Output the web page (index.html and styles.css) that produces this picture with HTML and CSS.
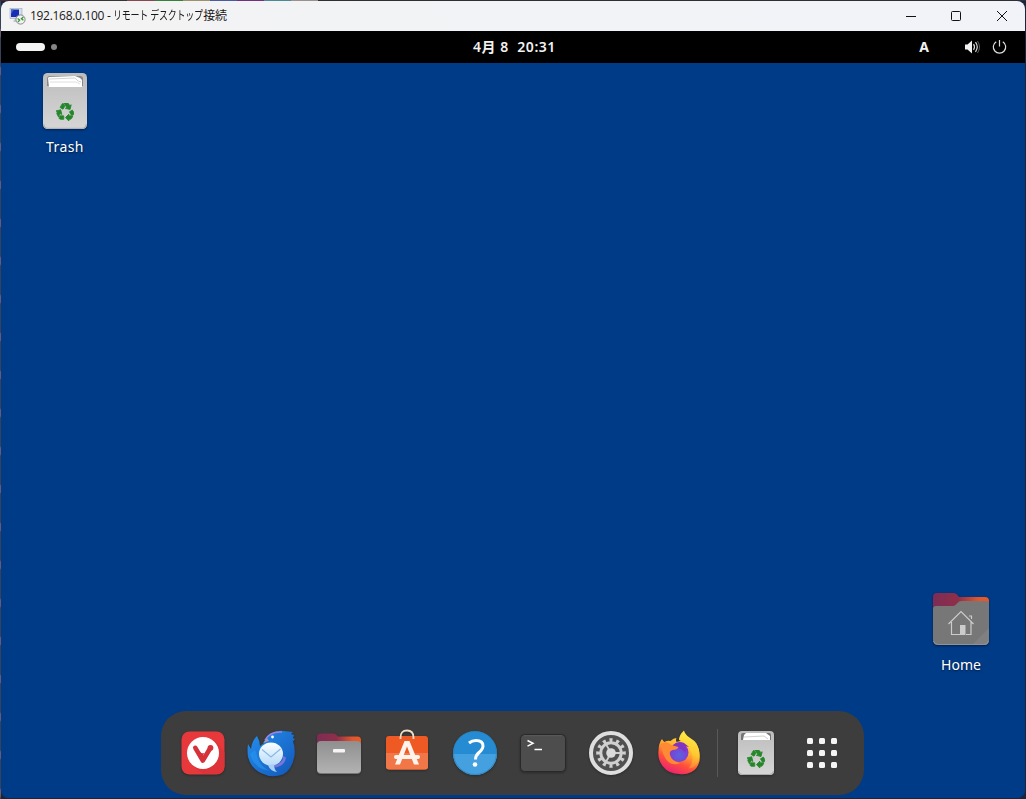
FILE: index.html
```html
<!DOCTYPE html>
<html lang="ja">
<head>
<meta charset="utf-8">
<title>192.168.0.100 - リモート デスクトップ接続</title>
<link rel="stylesheet" href="styles.css">
</head>
<body>
<svg class="defs" width="0" height="0" aria-hidden="true">
  <defs>
    <linearGradient id="bin" x1="0" y1="0" x2="0" y2="1"><stop offset="0" stop-color="#bdbdbd"/><stop offset="1" stop-color="#d6d6d6"/></linearGradient>
    <linearGradient id="tab" x1="0" y1="0" x2="1" y2="0"><stop offset="0" stop-color="#7d2c55"/><stop offset=".45" stop-color="#8f2f49"/><stop offset=".8" stop-color="#e0562d"/><stop offset="1" stop-color="#ea5a25"/></linearGradient>
    <linearGradient id="grey" x1="0" y1="0" x2="0" y2="1"><stop offset="0" stop-color="#8f8f8f"/><stop offset="1" stop-color="#b2b2b2"/></linearGradient>
    <linearGradient id="bird" x1="0" y1="0" x2="1" y2="1"><stop offset="0" stop-color="#2590ee"/><stop offset="1" stop-color="#1256b8"/></linearGradient>
    <linearGradient id="mail" x1="0" y1="0" x2="0" y2="1"><stop offset="0" stop-color="#fafdff"/><stop offset="1" stop-color="#b8dcfa"/></linearGradient>
    <linearGradient id="fire" x1=".8" y1="0" x2=".3" y2="1"><stop offset="0" stop-color="#fff04a"/><stop offset=".4" stop-color="#ffb02e"/><stop offset=".7" stop-color="#ff4f3c"/><stop offset="1" stop-color="#e91e78"/></linearGradient>
    <linearGradient id="flame" x1=".6" y1="0" x2=".4" y2="1"><stop offset="0" stop-color="#fff04a"/><stop offset=".6" stop-color="#ffc62f"/><stop offset="1" stop-color="#ff7139"/></linearGradient>
    <radialGradient id="globe" cx=".5" cy=".65" r=".6"><stop offset="0" stop-color="#5864e0"/><stop offset="1" stop-color="#8a35cc"/></radialGradient>
    <symbol id="recycle" viewBox="1 2 21 21"><path stroke="#26862a" stroke-width="1" d="M5.77 7.15L7.2 4.78l1.03-1.71c.39-.65 1.33-.65 1.72 0l1.48 2.46-1.23 2.06-1 1.62-3.43-2.06zm15.95 5.82l-1.6-2.66-3.46 2L18.87 16H20c.76 0 1.45-.43 1.79-1.11.14-.28.21-.58.21-.89 0-.36-.1-.71-.28-1.03zM16 21h1.5c.76 0 1.45-.43 1.79-1.11L20.74 17H16v-2l-4 4 4 4v-2zm-6-4H5.7l-.84 1.41c-.3.5-.32 1.12-.06 1.65.28.57.87.94 1.52.94H10v-4zm-3.88-2.65l1.73 1.04L6.48 9.9 1 11.27l1.7 1.02-.41.69c-.35.59-.38 1.31-.07 1.92l1.63 3.26 2.27-3.81zm10.9-9.21l-1.3-2.17C15.35 2.37 14.7 2 14 2h-3.53l3.12 5.2-1.72 1.03 5.49 1.37 1.37-5.49-1.71 1.03z"/></symbol>
  </defs>
</svg>

<div class="window">
  <header class="titlebar">
    <svg class="app-icon" width="17" height="17" viewBox="0 0 17 17">
      <rect x="1" y=".5" width="12" height="10" fill="#d7dde8" stroke="#a9b2c2" stroke-width=".7"/>
      <rect x="2" y="1.500" width="8" height="7.500" fill="#1630b5"/><path d="M2 1.500h3L2 6z" fill="#4464dc"/>
      <path d="M4 13l2-2h4v3H5z" fill="#c3cad5"/>
      <circle cx="11.500" cy="11.500" r="4.600" fill="#f2f2f2" stroke="#85898b"/>
      <path d="M8.600 10.500l2 1.500-1.600 2M14.400 9l-2 1.700 2 1.600" fill="none" stroke="#36962f" stroke-width="1.300"/>
    </svg>
    <span class="title">192.168.0.100 - <span class="kana">リモート デスクトップ</span>接続</span>
    <div class="controls">
      <svg width="46" height="29" viewBox="0 0 46 29"><path d="M18 14.500h10"/></svg>
      <svg width="45" height="29" viewBox="0 0 45 29"><rect x="17.500" y="9.500" width="9" height="9" rx="1"/></svg>
      <svg width="46" height="29" viewBox="0 0 46 29"><path d="M18 9l10 10M28 9l-10 10"/></svg>
    </div>
  </header>

  <div class="topbar">
    <div class="workspaces"><i class="pill"></i><i class="dot"></i></div>
    <time class="clock">4月 8&nbsp; 20:31</time>
    <div class="status">
      <span class="ime">A</span>
      <svg class="volume" width="16" height="16" viewBox="0 0 16 16"><path d="M1 5.500h2.500L8 1.500v13l-4.500-4H1z" fill="#f2f2f2"/><path d="M9.500 5.200q2 2.800 0 5.600M11.500 3.200q3.500 4.800 0 9.600" fill="none" stroke="#ddd" stroke-width="1.200"/><path d="M13.500 2q4 6 0 12" fill="none" stroke="#777" stroke-width=".8"/></svg>
      <svg class="power" width="16" height="16" viewBox="0 0 16 16" fill="none" stroke="#dedede" stroke-width="1.200"><path d="M7.500 1v6.500M4.200 2.700a6.200 6.200 0 1 0 6.600 0"/></svg>
    </div>
  </div>

  <main class="desktop">
    <figure class="shortcut trash-shortcut">
      <svg width="44" height="56" viewBox="0 0 44 56">
        <rect width="44" height="56" rx="4.500" fill="url(#bin)"/><path d="M.7 51q.5 4.300 4.500 4.300h33.600q4 0 4.500-4.300" fill="none" stroke="#aaa"/>
        <path d="M4 13V6q0-3 3-3h30q3 0 3 3v7z" fill="#8a8784"/>
        <path d="M5 5l1-1 26-1 5 2 2 2v7H6z" fill="#fff"/><path d="M6 6l26-1 3 3 3 1" fill="none" stroke="#c8c8c8" stroke-width=".8"/><path d="M7 9h26l4 2" fill="none" stroke="#d5d5d5" stroke-width=".8"/>
        <use href="#recycle" x="13" y="30" width="18" height="18" fill="#26862a"/>
      </svg>
      <figcaption>Trash</figcaption>
    </figure>
    <figure class="shortcut home-shortcut">
      <svg width="56" height="52" viewBox="0 0 56 52">
        <path d="M0 14V4q0-4 4-4h17q2 0 3 1.500l2 2.500h26q4 0 4 4v8H0z" fill="url(#tab)"/>
        <path d="M0 16q0-3 3-3h17q2 0 3.500-2l1-1q1.500-2 4-2H53q3 0 3 3v36q0 5-5 5H5q-5 0-5-5z" fill="#777"/><path d="M39 52l17-17v12q0 5-5 5z" fill="#808080"/><path d="M.5 48q1 3.500 5 3.500h45q4 0 5-3.500" fill="none" stroke="#929292"/>
        <path d="M15.500 31L28 18.500 40.500 31M18.500 29v12.500H27M33 41.500h5V29M36 23h2.500v3" fill="none" stroke="#ccc" stroke-width="1.200"/><path d="M27 32h5.500v10H27z" fill="#ccc"/>
      </svg>
      <figcaption>Home</figcaption>
    </figure>

    <nav class="dock">
      <div class="item"><svg width="48" height="48" viewBox="0 0 48 48">
        <rect x="2.500" y="2.500" width="43" height="43" rx="8" fill="#e7383c"/><path d="M36 12l9.500 11v14q0 8-8 8H24L13 36z" fill="#dc3439"/>
        <circle cx="24" cy="24" r="16" fill="#fff"/>
        <path d="M16.300 18.800L23.800 31.500 31.500 18.800" fill="none" stroke="#d53239" stroke-width="4.600" stroke-linecap="round" stroke-linejoin="round"/><circle cx="31.500" cy="18.800" r="2.900" fill="#d53239"/><path d="M19 20q2 5 6 4l-1.500 5z" fill="#d53239"/>
      </svg></div>
      <div class="item"><svg width="48" height="48" viewBox="0 0 48 48">
        <path d="M10 7q3 5 3 10l4-3q1-7 8-10 6-3 12-2l9 1-2 2 3 1-1 3 2 1-2 2.500q2.500 6 1.500 14.500Q45 41 36 45.500q-11 4-21-1Q4 40 1 28q-1-7 0-13l3 5q1-9 6-13z" fill="url(#bird)"/>
        <path d="M18 11q5-9 17-8" fill="none" stroke="#9b83e8" stroke-width="1.500"/><path d="M16 14l4-5 2 3z" fill="#a69ab8"/><circle cx="25.500" cy="8" r="1.400" fill="#fff"/>
        <path d="M3 25q4 15 20 17-9-4-12-12L8 21z" fill="#2795ef" opacity=".65"/>
        <path d="M36 27q1 7-10 9.500l3 2q9-2 10-10z" fill="#7975dc"/>
        <ellipse cx="24" cy="25" rx="12" ry="11.500" fill="url(#mail)"/><path d="M21 36l6-1q0 5 3 8-7-1-9-7z" fill="#a9cff5"/><path d="M15 20.500l9 7.500 9.500-8" fill="none" stroke="#8ab8e6" stroke-width="1.200"/>
      </svg></div>
      <div class="item"><svg width="48" height="48" viewBox="0 0 48 48">
        <path d="M2 16V8q0-3.500 3.500-3.500h13q1.500 0 2.500 1l2 2h19.500Q46 7.500 46 11v7H2z" fill="url(#tab)"/><rect x="2" y="12.500" width="44" height="32.500" rx="4" fill="#777"/><rect x="2" y="12" width="44" height="32" rx="4" fill="url(#grey)"/><rect x="18" y="20" width="12" height="3.500" rx="1" fill="#f5f5f5"/>
      </svg></div>
      <div class="item"><svg width="48" height="48" viewBox="0 0 48 48">
        <rect x="3" y="7" width="42" height="33.500" rx="3" fill="#ee5924"/><path d="M3 24h42v13.500q0 3-3 3H6q-3 0-3-3z" fill="#f27748"/><path d="M17.500 10V8.500q0-7 6.500-7t6.500 7V10" fill="none" stroke="#f0dfc2" stroke-width="1.800"/>
        <path d="M21.500 12h5L36 35.500h-5L24 17.500l-7 18h-5z" fill="#fff3ec"/><path d="M13 28h22" stroke="#fff3ec" stroke-width="4" stroke-linecap="round"/>
      </svg></div>
      <div class="item"><svg width="48" height="48" viewBox="0 0 48 48">
        <circle cx="24" cy="24" r="22" fill="#258bd3"/><path d="M2 25h44a22 21 0 0 1-44 0z" fill="#45a0df"/><circle cx="24" cy="24" r="21.500" fill="none" stroke="#2b81ba" stroke-width=".7"/><path d="M18 14q3-2.500 7-2.500 7 0 7 5.500 0 3-4 6.500-3.500 3-3.500 7" fill="none" stroke="#fff" stroke-width="3"/><circle cx="24" cy="35.500" r="2.300" fill="#fff"/>
      </svg></div>
      <div class="item"><svg width="48" height="48" viewBox="0 0 48 48">
        <rect x="1.500" y="5.500" width="45" height="37" rx="4" fill="#4d4d4d" stroke="#292929"/><path d="M5 6.700h38" stroke="#606060" stroke-width=".8"/><path d="M8.500 11.500l5.500 2.800-5.500 2.800M15.500 20.500H23" fill="none" stroke="#fff" stroke-width="1.500"/>
      </svg></div>
      <div class="item"><svg width="48" height="48" viewBox="0 0 48 48">
        <circle cx="24" cy="24" r="20" fill="#505050" stroke="#dedede" stroke-width="4"/>
        <g fill="none" stroke="#cfcfcf"><circle cx="24" cy="24" r="10.200" stroke-width="3"/><circle cx="24" cy="24" r="12.800" stroke-width="4" pathLength="60" stroke-dasharray="2.300 2.700" stroke-dashoffset="1.150"/><path d="M24 24h10M24 24l-5 8.700M24 24l-5-8.700" stroke-width="1.800"/></g><circle cx="24" cy="24" r="4.800" fill="#dadada"/>
      </svg></div>
      <div class="item"><svg width="48" height="48" viewBox="0 0 48 48">
        <path d="M7 10q1 2 2.500 3 3-2 6-1 3-3 6-3-1 2 0 4l4-1 3-6q2 1 4 3 7 4 10 8 3 7 2 15-2 8-8 11-6 3-12 2-11 0-17-8-5-7-4-15 0-8 3.500-12z" fill="url(#fire)"/>
        <path d="M24 11q0-5 5-9.500 1 4 5.500 7 5 3 7 6 5 9 2 17-3 8-10 8 6-7 3-16-3-9-12.500-12.500z" fill="url(#flame)"/>
        <circle cx="24" cy="23.500" r="9.500" fill="url(#globe)"/><path d="M18 16q5-5 11-2l5 4-5-1q4 4 1 6l-4-3-8-2z" fill="#8233c0"/>
        <path d="M6 15q6-4 10 1l7.500 2q-1 3-6 3-3 1-3 4 2 8 11 9-7 3-12-1-6-5-7.500-18z" fill="#ff8a36"/>
      </svg></div>
      <span class="separator"></span>
      <div class="item"><svg width="48" height="48" viewBox="0 0 48 48">
        <rect x="6" y="2" width="36" height="44" rx="4" fill="url(#bin)"/><path d="M6.500 42q.5 3.500 4 3.500h27q3.500 0 4-3.500" fill="none" stroke="#aaa"/><path d="M9 11V6q0-2 2-2h26q2 0 2 2v5z" fill="#77736f"/><path d="M12 6l2-2 20 0 4 3v4H11z" fill="#fff"/><path d="M12 8l20-1 4 3" fill="none" stroke="#c4c4c4" stroke-width=".8"/><use href="#recycle" x="15" y="21" width="18" height="18" fill="#26862a"/>
      </svg></div>
      <div class="apps"><i></i><i></i><i></i><i></i><i></i><i></i><i></i><i></i><i></i></div>
    </nav>
  </main>
</div>
</body>
</html>
```
FILE: styles.css
```css
* { box-sizing: border-box; }
body {
  margin: 0;
  width: 1026px;
  height: 799px;
  padding: 1px;
  overflow: hidden;
  background: linear-gradient(90deg, #4a2733 0 60px, #353535 60px 127px, #864850 127px 155px, #387f3c 155px 183px, #99946c 183px 210px, #495ca0 210px 237px, #702f80 237px 264px, #4b8995 264px 291px, #99918c 291px 318px, #302e35 318px) top / 100% 1px no-repeat,
    repeating-linear-gradient(#35425a 0 28px, #6a5a74 30px 36px, #35425a 38px) left / 1px 100% no-repeat,
    #1b2537;
  font-family: "Noto Sans", "Noto Sans CJK JP", sans-serif;
}
.defs { position: absolute; }
.window {
  height: 797px;
  display: flex;
  flex-direction: column;
  border-radius: 8px;
  overflow: hidden;
  background: #003b87;
}
.titlebar {
  height: 30px;
  flex: none;
  display: flex;
  align-items: center;
  padding-left: 8px;
  background: linear-gradient(90deg, #f3f3f3, #f1f3f9);
}
.app-icon { margin-right: 4px; }
.title {
  font: 12px/16px "Open Sans", "Noto Sans CJK JP", sans-serif;
  color: #191919;
  letter-spacing: -0.3px;
  white-space: pre;
}
.kana {
  display: inline-block;
  transform: scaleX(.75);
  transform-origin: left;
  margin-right: -30px;
}
.controls { display: flex; margin-left: auto; }
.controls svg { fill: none; stroke: #111; stroke-width: 1; }
.topbar {
  height: 32px;
  flex: none;
  display: grid;
  grid-template-columns: 1fr auto 1fr;
  align-items: center;
  background: #000;
  color: #f2f2f2;
}
.workspaces { display: flex; align-items: center; gap: 6px; padding-left: 15px; }
.pill { width: 29px; height: 8px; border-radius: 4px; background: #f4f4f4; }
.dot { width: 6px; height: 6px; border-radius: 50%; background: #858585; }
.clock { font-size: 14px; line-height: 20px; font-weight: 600; padding: 0 0 0 3px; letter-spacing: .55px; white-space: pre; }
.status { display: flex; align-items: center; justify-content: flex-end; padding-right: 17px; }
.ime { font-size: 14px; line-height: 20px; font-weight: 700; margin-right: 35px; padding-bottom: 1px; }
.volume { margin-right: 12px; }
.desktop { position: relative; flex: 1; background: #003b87; }
.shortcut {
  position: absolute;
  margin: 0;
  display: flex;
  flex-direction: column;
  align-items: center;
  color: #fff;
  font-size: 14px;
  line-height: 20px;
  text-shadow: 0 1px 2px #001b40;
}
.shortcut svg { filter: drop-shadow(0 1px 1px #002052); }
.trash-shortcut { left: 42px; top: 10px; gap: 8px; letter-spacing: .4px; }
.home-shortcut { left: 932px; top: 530px; gap: 10px; }
.dock {
  position: absolute;
  left: 160px;
  bottom: 3px;
  width: 703px;
  height: 84px;
  padding-left: 8px;
  display: flex;
  align-items: center;
  border-radius: 25px;
  background: #3d3d3d;
}
.item { width: 68px; display: grid; place-items: center; }
.item svg { display: block; filter: drop-shadow(0 1px 1px #2a2a2a); }
.separator { width: 1px; height: 48px; margin: 0 4px; background: #595959; }
.apps {
  margin-left: 17px;
  display: grid;
  grid-template-columns: repeat(3, 6px);
  gap: 6px;
}
.apps i { width: 6px; height: 6px; border-radius: 1.5px; background: #f5f5f5; }
```
